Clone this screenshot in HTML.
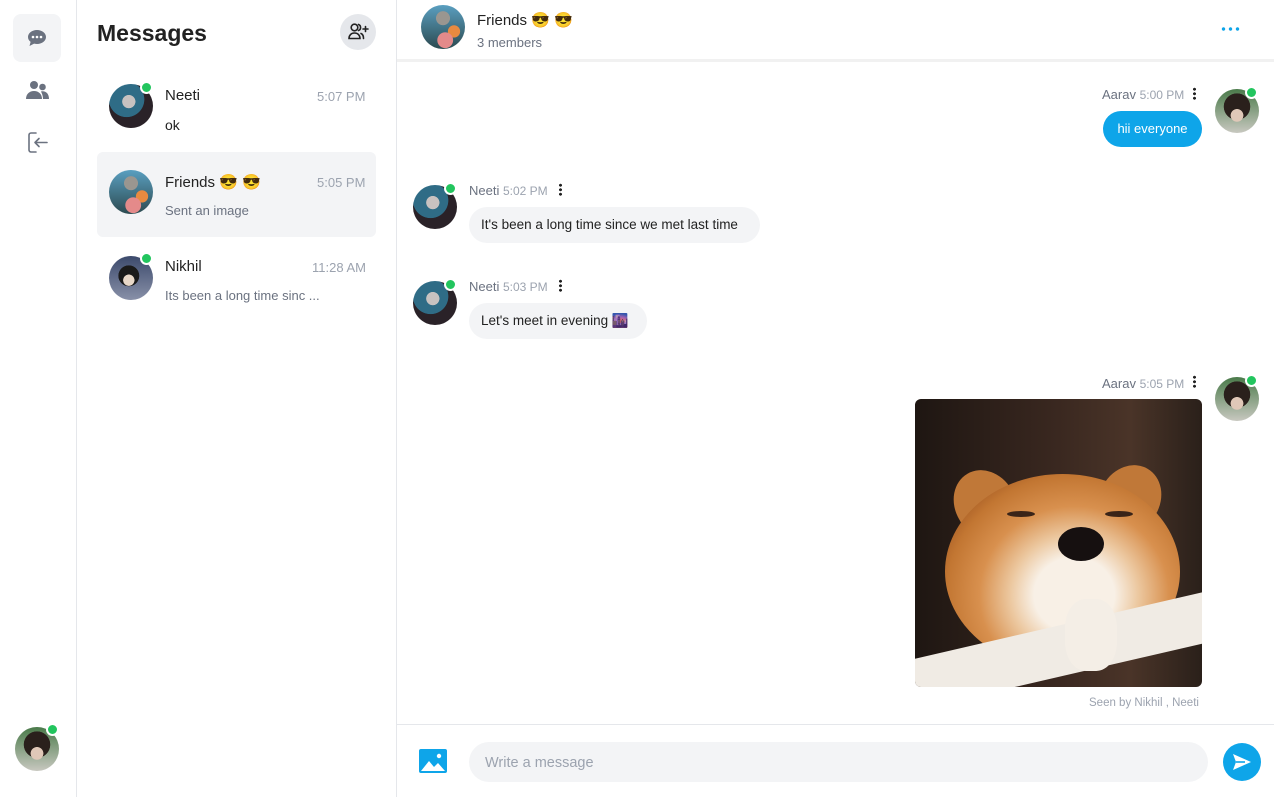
<!DOCTYPE html>
<html><head><meta charset="utf-8"><style>
*{box-sizing:border-box;margin:0;padding:0}
body{width:1274px;height:797px;overflow:hidden;background:#fff;font-family:"Liberation Sans","Noto Sans CJK JP",sans-serif;position:relative;color:#222}
.abs{position:absolute}
.av{position:absolute;width:44px;height:44px;border-radius:50%;overflow:hidden}
.neeti{background:radial-gradient(circle at 45% 40%,#c8c2c0 0 18%,transparent 19%),radial-gradient(circle at 40% 35%,#2f6c86 0 45%,transparent 46%),#2a2228}
.friends{background:radial-gradient(circle at 50% 30%,#9a9690 0 18%,transparent 19%),radial-gradient(circle at 55% 80%,#e48a8a 0 18%,transparent 19%),radial-gradient(circle at 75% 60%,#e88a40 0 14%,transparent 15%),linear-gradient(#5a9fc0,#2c4a50)}
.nikhil{background:radial-gradient(circle at 45% 55%,#e8d8c8 0 16%,transparent 17%),radial-gradient(circle at 45% 45%,#1a1a1a 0 30%,transparent 31%),linear-gradient(#3c4a6c,#8890a8)}
.aarav{background:radial-gradient(circle at 50% 60%,#e0c8b8 0 18%,transparent 19%),radial-gradient(circle at 50% 40%,#2a201c 0 38%,transparent 39%),linear-gradient(#4a7a4a,#c8c8c0)}
.dot{position:absolute;width:13px;height:13px;border-radius:50%;background:#22c55e;border:2px solid #fff}
.name{font-size:15px;color:#222}
.time{font-size:13px;color:#9ca3af}
.sub{font-size:13px;color:#6b7280}
.meta{font-size:13px;color:#6b7280}
.meta span{font-size:12px;color:#9ca3af}
.bub{position:absolute;background:#f3f4f6;border-radius:18px;font-size:13.5px;color:#222;height:36px;line-height:36px;padding:0 12px;white-space:nowrap}
.kebab{position:absolute;width:3px;height:13px;background:radial-gradient(circle,#222 1.4px,transparent 1.6px) 0 0/3px 4.5px}
</style></head><body>
<div class="abs" style="left:76px;top:0;width:1px;height:797px;background:#e5e7eb"></div>
<div class="abs" style="left:13px;top:14px;width:48px;height:48px;border-radius:8px;background:#f3f4f6"></div>
<svg class="abs" style="left:27px;top:29px" width="20" height="18" viewBox="0 0 20 18"><path d="M10 1C4.8 1 1 4.3 1 8c0 2 1 3.7 2.6 4.9L2.5 17l4.6-2.4c.9.3 1.9.4 2.9.4 5.2 0 9-3.3 9-7S15.2 1 10 1z" fill="#6b7280"/><circle cx="6" cy="8" r="1.3" fill="#fff"/><circle cx="10" cy="8" r="1.3" fill="#fff"/><circle cx="14" cy="8" r="1.3" fill="#fff"/></svg>
<svg class="abs" style="left:26px;top:80px" width="23" height="20" viewBox="0 0 23 20"><circle cx="8" cy="5" r="4" fill="#6b7280"/><circle cx="16.5" cy="7" r="3.3" fill="#6b7280"/><path d="M0 19c0-5 3.5-8 8-8s8 3 8 8z" fill="#6b7280"/><path d="M15 11.5c4 -1 8 1.5 8 7.5h-6c0-3-1-5.5-2-7.5z" fill="#6b7280"/></svg>
<svg class="abs" style="left:28px;top:132px" width="20" height="21" viewBox="0 0 20 21" fill="none" stroke="#6b7280" stroke-width="1.6" stroke-linecap="round" stroke-linejoin="round"><path d="M8 1H3a2 2 0 0 0-2 2v15a2 2 0 0 0 2 2h5"/><path d="M19 10.5H7M11 6.5l-4 4 4 4"/></svg>
<div class="av aarav" style="left:15px;top:727px"></div><div class="dot" style="left:46px;top:723px"></div>

<div class="abs" style="left:396px;top:0;width:1px;height:797px;background:#e5e7eb"></div>
<div class="abs" style="left:97px;top:20px;font-size:23px;font-weight:bold;color:#222">Messages</div>
<div class="abs" style="left:340px;top:14px;width:36px;height:36px;border-radius:50%;background:#e5e7eb"></div>
<svg class="abs" style="left:348px;top:23px" width="21" height="17" viewBox="0 0 21 17" fill="none" stroke="#222" stroke-width="1.6" stroke-linecap="round"><circle cx="6.5" cy="4.5" r="3.3"/><path d="M1 15.5c0-3.5 2.5-5.5 5.5-5.5s5.5 2 5.5 5.5z"/><path d="M10.5 1.5a3.2 3.2 0 0 1 0 6M13 10.5c1.5.6 2.5 2.2 2.5 5M17.5 3.5v5M15 6h5"/></svg>

<div class="av neeti" style="left:109px;top:84px"></div><div class="dot" style="left:140px;top:81px"></div>
<div class="abs name" style="left:165px;top:87px">Neeti</div>
<div class="abs time" style="left:317px;top:89px">5:07 PM</div>
<div class="abs" style="left:165px;top:117px;font-size:14px;color:#222">ok</div>

<div class="abs" style="left:97px;top:152px;width:279px;height:85px;border-radius:6px;background:#f3f4f6"></div>
<div class="av friends" style="left:109px;top:170px"></div>
<div class="abs name" style="left:165px;top:173px">Friends 😎 😎</div>
<div class="abs time" style="left:317px;top:175px">5:05 PM</div>
<div class="abs sub" style="left:165px;top:203px">Sent an image</div>

<div class="av nikhil" style="left:109px;top:256px"></div><div class="dot" style="left:140px;top:252px"></div>
<div class="abs name" style="left:165px;top:258px">Nikhil</div>
<div class="abs time" style="left:312px;top:260px">11:28 AM</div>
<div class="abs sub" style="left:165px;top:288px">Its been a long time sinc ...</div>

<div class="abs" style="left:397px;top:59px;width:877px;height:3px;background:#f1f1f1"></div>
<div class="av friends" style="left:421px;top:5px"></div>
<div class="abs" style="left:477px;top:11px;font-size:15px;color:#222">Friends 😎 😎</div>
<div class="abs" style="left:477px;top:35px;font-size:13px;color:#6b7280">3 members</div>
<div class="abs" style="left:1220px;top:27px;width:20px;height:4px;background:radial-gradient(circle,#0ea5e9 1.6px,transparent 1.9px) 0 0/7px 4px"></div>

<div class="abs meta" style="left:1102px;top:87px">Aarav <span>5:00 PM</span></div>
<div class="kebab" style="left:1193px;top:87px"></div>
<div class="av aarav" style="left:1215px;top:89px"></div><div class="dot" style="left:1245px;top:86px"></div>
<div class="bub" style="left:1103px;top:111px;width:99px;background:#0ea5e9;color:#fff;padding:0;text-align:center;font-size:13px">hii everyone</div>

<div class="av neeti" style="left:413px;top:185px"></div><div class="dot" style="left:444px;top:182px"></div>
<div class="abs meta" style="left:469px;top:183px">Neeti <span>5:02 PM</span></div>
<div class="kebab" style="left:559px;top:183px"></div>
<div class="bub" style="left:469px;top:207px;width:291px">It's been a long time since we met last time</div>

<div class="av neeti" style="left:413px;top:281px"></div><div class="dot" style="left:444px;top:278px"></div>
<div class="abs meta" style="left:469px;top:279px">Neeti <span>5:03 PM</span></div>
<div class="kebab" style="left:559px;top:279px"></div>
<div class="bub" style="left:469px;top:303px;width:178px">Let's meet in evening 🌆</div>

<div class="abs meta" style="left:1102px;top:376px">Aarav <span>5:05 PM</span></div>
<div class="kebab" style="left:1193px;top:375px"></div>
<div class="av aarav" style="left:1215px;top:377px"></div><div class="dot" style="left:1245px;top:374px"></div>
<div class="abs" style="left:915px;top:399px;width:287px;height:288px;border-radius:6px;overflow:hidden;background:linear-gradient(90deg,#1e1612,#3a2820 50%,#4a3428 75%,#2a201a)">
 <div class="abs" style="left:40px;top:70px;width:60px;height:70px;border-radius:50% 50% 30% 30%;background:#c07838;transform:rotate(-30deg)"></div>
 <div class="abs" style="left:185px;top:65px;width:60px;height:70px;border-radius:50% 50% 30% 30%;background:#c07838;transform:rotate(30deg)"></div>
 <div class="abs" style="left:30px;top:75px;width:235px;height:195px;border-radius:50%;background:radial-gradient(ellipse at 55% 62%,#f8f0e6 0 22%,#ecc8a0 35%,#d8904e 52%,#c27632 70%,#a85e26 80%,transparent 81%)"></div>
 <div class="abs" style="left:92px;top:112px;width:28px;height:6px;border-radius:50%;background:#3a2418"></div>
 <div class="abs" style="left:190px;top:112px;width:28px;height:6px;border-radius:50%;background:#3a2418"></div>
 <div class="abs" style="left:143px;top:128px;width:46px;height:34px;border-radius:50%;background:#161010"></div>
 <div class="abs" style="left:-10px;top:262px;width:320px;height:50px;background:#f0ebe4;transform:rotate(-13deg);transform-origin:0 0"></div>
 <div class="abs" style="left:150px;top:200px;width:52px;height:72px;border-radius:40%;background:#f4eee6"></div>
</div>
<div class="abs" style="left:1089px;top:697px;font-size:11.5px;color:#9ca3af">Seen by Nikhil , Neeti</div>

<div class="abs" style="left:397px;top:724px;width:877px;height:1px;background:#e5e7eb"></div>
<svg class="abs" style="left:419px;top:749px" width="28" height="24" viewBox="0 0 28 24"><rect width="28" height="24" rx="2" fill="#0ea5e9"/><path d="M2 22l8-10 5 6 4-4 7 8z" fill="#fff"/><circle cx="20" cy="7" r="2.2" fill="#fff"/></svg>
<div class="abs" style="left:469px;top:742px;width:739px;height:40px;border-radius:20px;background:#f3f4f6;font-size:14.5px;color:#9ca3af;line-height:42px;padding-left:16px">Write a message</div>
<div class="abs" style="left:1223px;top:743px;width:38px;height:38px;border-radius:50%;background:#0ea5e9"></div>
<svg class="abs" style="left:1232px;top:753px" width="20" height="18" viewBox="0 0 20 18"><path d="M1 1l18 8-18 8 3-8z" fill="#fff"/><path d="M4 9h9" stroke="#0ea5e9" stroke-width="1.6"/></svg>
</body></html>
